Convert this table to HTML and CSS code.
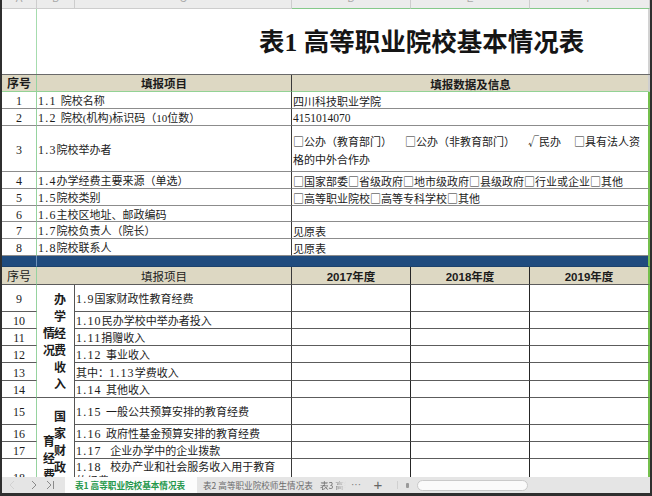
FILE: index.html
```html
<!DOCTYPE html>
<html lang="zh-CN">
<head>
<meta charset="utf-8">
<title>表1 高等职业院校基本情况表</title>
<link rel="stylesheet" href="styles.css">
</head>
<body>
<div class="page">
  <div class="colhdr">
    <span><i>A</i></span><span><i>B</i></span><span><i>C</i></span>
    <span class="sel"><i>D</i></span><span class="sel"><i>E</i></span><span class="sel"><i>F</i></span>
  </div>
  <div class="main">
    <div class="title">
      <div class="gut"></div>
      <h1>表1 高等职业院校基本情况表</h1>
    </div>
    <div class="grid">
      <!-- header 1 -->
      <div class="c num hd hd1 b">序号</div>
      <div class="c it s23 hd hd1 b ctr">填报项目</div>
      <div class="c dt0 s46 hd hd1 b ctr">填报数据及信息</div>
      <!-- rows 1-8 -->
      <div class="c num">1</div>
      <div class="c it s23"><span class="n">1.1&nbsp;</span>院校名称</div>
      <div class="c dt s46">四川科技职业学院</div>

      <div class="c num">2</div>
      <div class="c it s23"><span class="n">1.2&nbsp;</span>院校(机构)标识码（10位数）</div>
      <div class="c dt s46"><span class="lat">4151014070</span></div>

      <div class="c num">3</div>
      <div class="c it s23"><span class="n">1.3</span>院校举办者</div>
      <div class="c dt s46 multi">
        <div class="opts"><span>□公办（教育部门）</span><span>□公办（非教育部门）</span><span>√民办</span><span>□具有法人资</span></div>
        <div>格的中外合作办</div>
      </div>

      <div class="c num">4</div>
      <div class="c it s23"><span class="n">1.4</span>办学经费主要来源（单选）</div>
      <div class="c dt s46">□国家部委□省级政府□地市级政府□县级政府□行业或企业□其他</div>

      <div class="c num">5</div>
      <div class="c it s23"><span class="n">1.5</span>院校类别</div>
      <div class="c dt s46">□高等职业院校□高等专科学校□其他</div>

      <div class="c num">6</div>
      <div class="c it s23"><span class="n">1.6</span>主校区地址、邮政编码</div>
      <div class="c dt s46"></div>

      <div class="c num">7</div>
      <div class="c it s23"><span class="n">1.7</span>院校负责人（院长）</div>
      <div class="c dt s46">见原表</div>

      <div class="c num">8</div>
      <div class="c it s23"><span class="n">1.8</span>院校联系人</div>
      <div class="c dt s46">见原表</div>

      <!-- blue band -->
      <div class="c blue blue1"></div>
      <div class="c blue blue2 s26"></div>

      <!-- header 2 -->
      <div class="c num hd lo">序号</div>
      <div class="c lo it s23 hd ctr">填报项目</div>
      <div class="c lo y hd b ctr sans">2017年度</div>
      <div class="c lo y hd b ctr sans">2018年度</div>
      <div class="c lo y3 hd b ctr sans">2019年度</div>

      <!-- rows 9-14 -->
      <div class="c num lo">9</div>
      <div class="grp g1"><span>办学经费收入情况</span></div>
      <div class="c lo it"><span class="n">1.9</span>国家财政性教育经费</div>
      <div class="c lo y"></div><div class="c lo y"></div><div class="c lo y3"></div>

      <div class="c num lo">10</div>
      <div class="c lo it"><span class="n">1.10</span>民办学校中举办者投入</div>
      <div class="c lo y"></div><div class="c lo y"></div><div class="c lo y3"></div>

      <div class="c num lo">11</div>
      <div class="c lo it"><span class="n">1.11</span>捐赠收入</div>
      <div class="c lo y"></div><div class="c lo y"></div><div class="c lo y3"></div>

      <div class="c num lo">12</div>
      <div class="c lo it"><span class="n">1.12&nbsp;</span>事业收入</div>
      <div class="c lo y"></div><div class="c lo y"></div><div class="c lo y3"></div>

      <div class="c num lo">13</div>
      <div class="c lo it">其中：<span class="n">1.13</span>学费收入</div>
      <div class="c lo y"></div><div class="c lo y"></div><div class="c lo y3"></div>

      <div class="c num lo">14</div>
      <div class="c lo it"><span class="n">1.14&nbsp;</span>其他收入</div>
      <div class="c lo y"></div><div class="c lo y"></div><div class="c lo y3"></div>

      <!-- rows 15-19 -->
      <div class="c num lo">15</div>
      <div class="grp g2"><span>国家财政性教育经费</span></div>
      <div class="c lo it"><span class="n">1.15&nbsp;</span>一般公共预算安排的教育经费</div>
      <div class="c lo y"></div><div class="c lo y"></div><div class="c lo y3"></div>

      <div class="c num lo">16</div>
      <div class="c lo it"><span class="n">1.16&nbsp;</span>政府性基金预算安排的教育经费</div>
      <div class="c lo y"></div><div class="c lo y"></div><div class="c lo y3"></div>

      <div class="c num lo">17</div>
      <div class="c lo it"><span class="n">1.17&nbsp;&nbsp;</span>企业办学中的企业拨款</div>
      <div class="c lo y"></div><div class="c lo y"></div><div class="c lo y3"></div>

      <div class="c num lo low">18</div>
      <div class="c lo it top"><span><span class="n">1.18&nbsp;&nbsp;</span>校办产业和社会服务收入用于教育<br>的经费</span></div>
      <div class="c lo y"></div><div class="c lo y"></div><div class="c lo y3"></div>

      <div class="c num lo">19</div>
      <div class="c lo it"></div>
      <div class="c lo y"></div><div class="c lo y"></div><div class="c lo y3"></div>
    </div>
  </div>
  <div class="tabs">
    <div class="nav">
      <svg width="63" height="16" viewBox="0 0 63 16" aria-hidden="true">
        <polyline points="12,4 8,8 12,12" fill="none" stroke="#d2d2d2" stroke-width="1"/>
        <polyline points="30,4 34,8 30,12" fill="none" stroke="#8a8a8a" stroke-width="1"/>
        <polyline points="45,4 49,8 45,12" fill="none" stroke="#8a8a8a" stroke-width="1"/>
        <line x1="51.5" y1="4" x2="51.5" y2="12" stroke="#8a8a8a" stroke-width="1"/>
      </svg>
    </div>
    <div class="tab on">表1 高等职业院校基本情况表</div>
    <div class="tab t2">表2 高等职业院校师生情况表</div>
    <div class="tab cut">表3 高等职业</div>
    <div class="more">···</div>
    <div class="add">+</div>
    <div class="sep"></div>
    <div class="hs"><span class="arr"></span><span class="thumb"></span></div>
  </div>
</div>
</body>
</html>
```
FILE: styles.css
```css
* { box-sizing: border-box; }
html, body { margin: 0; padding: 0; }
body {
  width: 652px;
  height: 496px;
  overflow: hidden;
  background: #fff;
  font-family: "Liberation Serif", "Noto Sans CJK SC", serif;
  color: #1b1b1b;
}
.page {
  width: 652px;
  height: 496px;
  border-left: 2px solid #2f2f2f;
  border-right: 2px solid #2f2f2f;
  border-bottom: 3px solid #2f2f2f;
  display: flex;
  flex-direction: column;
  overflow: hidden;
}

/* column header strip */
.colhdr {
  flex: none;
  height: 9px;
  display: grid;
  grid-template-columns: 35px 38px 217px 119px 119px 120px;
  background: #ececec;
}
.colhdr span {
  border-right: 1px solid #cdcdcd;
  border-bottom: 1px solid #cdcdcd;
  overflow: hidden;
  text-align: center;
}
.colhdr span.sel { border-bottom-color: #86c98a; }
.colhdr i {
  display: block;
  font: normal 10px/10px "Liberation Sans", sans-serif;
  color: #a8a8a8;
  margin-top: -6px;
}

.main { flex: 1; min-height: 0; overflow: hidden; }

/* title */
.title {
  height: 66px;
  display: flex;
  border-bottom: 1px solid #6a6a6a;
}
.title .gut { width: 35px; border-right: 1px solid #a6dcae; }
.title h1 {
  flex: 1;
  margin: 0;
  padding: 3px 0 0 222px;
  display: flex;
  align-items: center;
  font-family: "Liberation Serif", "Noto Sans CJK SC", serif;
  font-weight: 700;
  font-size: 25.5px;
  line-height: 1;
  color: #151515;
  border-right: 2px solid #d2d2d2;
  white-space: nowrap;
}

/* sheet grid */
.grid {
  display: grid;
  grid-template-columns: 35px 38px 217px 119px 119px 120px;
  grid-template-rows: 17px 17px 17px 46px 17px 17px 16px 17px 17px 11px 18px 27px 17px 17px 17px 18px 17px 27px 17px 17px 40px 19px;
}
.c {
  border-right: 1px solid #8c8c8c;
  border-bottom: 1px solid #8c8c8c;
  display: flex;
  align-items: center;
  padding: 2px 0 0 1px;
  font-size: 11px;
  line-height: 14px;
  white-space: nowrap;
  overflow: hidden;
  min-width: 0;
}
.s23 { grid-column: 2 / 4; }
.s46 { grid-column: 4 / 7; }
.s26 { grid-column: 2 / 7; }
.ctr { justify-content: center; padding-left: 0; }
.b { font-weight: 700; }
.sans { font-family: "Liberation Sans", "Noto Sans CJK SC", sans-serif; font-size: 11.5px; }

.hd {
  background: #ddd8c3;
  font-family: "Liberation Sans", "Noto Sans CJK SC", sans-serif;
  font-size: 11.5px;
}
.hd1 { border-bottom-color: #93d295; }

.num {
  grid-column: 1;
  justify-content: center;
  padding-left: 0;
  font-size: 12px;
  border-right-color: #96d39f;
}
.low { align-items: flex-start; padding-top: 12px; }
.it { border-right-color: #3a3a3a; }
.n { font-size: 12px; letter-spacing: 1.2px; }
.dt, .dt0 {
  font-family: "Noto Sans CJK SC", sans-serif;
  padding-left: 1px;
}
.dt { border-right: 2px solid #74c04c; }
.dt0 { border-right: 2px solid #cfcfcf; }
.lat { font-family: "Liberation Serif", serif; font-size: 11.5px; }

.multi {
  flex-direction: column;
  align-items: stretch;
  justify-content: center;
  line-height: 18px;
  padding: 3px 8px 0 1px;
}
.opts { display: flex; justify-content: space-between; }

.blue { background: #1f4b7e; border-bottom-color: #1c416c; }
.blue1 { border-right-color: #6f93bd; }
.blue2 { border-right: 2px solid #74c04c; }

.lo { border-bottom-color: #5c5c5c; }
.y { border-right-color: #262626; }
.y3 { border-right: 2px solid #74c04c; }
.top { align-items: flex-start; padding-top: 1px; white-space: normal; }

/* vertical group labels */
.grp {
  grid-column: 2;
  border-right: 1px solid #555;
  border-bottom: 1px solid #5c5c5c;
  display: flex;
  align-items: center;
  justify-content: center;
  padding: 6px 2px 0 0;
  overflow: hidden;
}
.g1 { grid-row: 12 / 18; }
.g2 { grid-row: 18 / 23; }
.grp span {
  writing-mode: vertical-rl;
  height: 104px;
  font-family: "Noto Sans CJK SC", sans-serif;
  font-weight: 700;
  font-size: 12px;
  line-height: 11px;
  letter-spacing: 5px;
  text-align: center;
  color: #1b1b1b;
}

/* sheet tabs */
.tabs {
  flex: none;
  height: 16px;
  display: flex;
  background: #e5e5e5;
  font-family: "Noto Sans CJK SC", sans-serif;
  font-size: 8.6px;
  line-height: 16px;
  color: #6d6d6d;
}
.nav { width: 63px; flex: none; }
.nav svg { display: block; }
.tab { flex: none; white-space: nowrap; overflow: hidden; }
.tab.on { width: 132px; padding-left: 10px; background: #fcfcfc; color: #23974a; font-weight: 700; }
.tab.t2 { width: 121px; padding-left: 6px; }
.tab.cut {
  width: 28px;
  padding-left: 2px;
  -webkit-mask-image: linear-gradient(to right, #000 55%, transparent);
  mask-image: linear-gradient(to right, #000 55%, transparent);
}
.more { flex: none; width: 20px; text-align: center; color: #777; font-family: "Liberation Sans", sans-serif; font-size: 10px; }
.add { flex: none; width: 24px; text-align: center; color: #666; font-size: 15px; font-family: "Liberation Sans", sans-serif; }
.sep { flex: none; width: 14px; display: flex; justify-content: center; align-items: center; }
.sep::before { content: ""; width: 1px; height: 8px; background: #d0d0d0; }
.hs { flex: 1; display: flex; align-items: center; padding-top: 1px; }
.arr { width: 3px; height: 5px; background: #9a9a9a; margin: 0 8px 0 2px; border-radius: 1px; }
.thumb {
  width: 111px;
  height: 11px;
  background: #fafafa;
  border: 1px solid #c9c9c9;
  border-radius: 6px;
}
```
